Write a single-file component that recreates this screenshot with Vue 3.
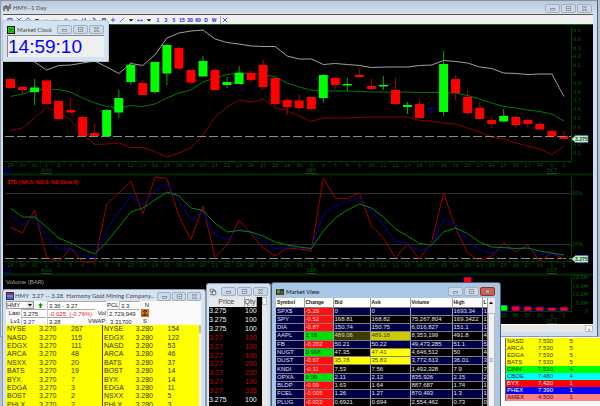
<template>
  <main class="desktop">
    <section class="window chart-window">
      <header class="titlebar">
        <svg class="app-icon" viewBox="0 0 8 8">
          <rect width="8" height="8" fill="#d8d8d8" />
          <path d="M1 2v5M3 1v4M5 2v5M7 0v5" stroke="#222" />
          <path d="M2.5 2h1v2h-1zM4.5 3h1v3h-1z" fill="#fff" stroke="#333" stroke-width=".5" />
        </svg>
        <h1>HMY--1 Day</h1>
        <div class="controls">
          <button v-for="c in controls" :key="c.name" :aria-label="c.name">
            <svg viewBox="0 0 8 6"><path :d="c.path" /></svg>
          </button>
        </div>
      </header>
      <nav class="toolbar">
        <div v-for="(group, g) in tools" :key="g" class="tool-group">
          <button v-for="(t, i) in group" :key="i" :class="t.kind" :aria-label="t.name">
            <svg v-if="t.path" viewBox="0 0 8 8"><path :d="t.path" /></svg>
            <template v-else>{{ t.name }}</template>
          </button>
        </div>
      </nav>
      <svg class="chart" viewBox="3 25 590 299">
        <rect x="3" y="25" width="590" height="299" fill="#000" />

        <!-- panel frames and axes -->
        <g fill="none" stroke="#003f00">
          <path d="M3 174.5H593M3 274.5H593" stroke="#002c00" stroke-width="2" />
          <path d="M4 161.5H571.5V27M4 261.5H571.5V177M4 311.5H571.5V277" />
          <path :d="ticks" />
        </g>
        <path d="M5 193.5H571M5 244.5H571" stroke="#2e2e2e" />

        <g class="axis">
          <template v-for="(d, i) in days" :key="i">
            <text :x="px(i)" y="167" text-anchor="middle">{{ d }}</text>
            <text :x="px(i)" y="267" text-anchor="middle">{{ d }}</text>
            <text v-if="i > 40" :x="px(i)" y="317" text-anchor="middle">{{ d }}</text>
          </template>
          <g v-for="m in months" :key="m.at + '-' + m.y">
            <text :x="px(m.at)" :y="m.y" text-anchor="middle">{{ m.label }}</text>
            <path :d="`M${px(m.at) - 5} ${m.y + 1.5}h10`" stroke="#2c3f2c" />
          </g>
          <text v-for="(p, i) in prices" :key="p" x="573" :y="32 + i * 8.8">{{ p }}</text>
          <text x="572" y="195">80%</text>
          <text x="572" y="246">20%</text>
          <text v-for="(v, i) in volumes" :key="v" x="588" :y="279 + i * 8.5" text-anchor="end">{{ v }}</text>
        </g>
        <g class="year">
          <text x="5" y="171">13</text>
          <text x="5" y="271">13</text>
          <path d="M4.5 172.5h6M4.5 272.5h6" stroke="#0000b0" />
        </g>

        <!-- bands -->
        <g fill="none" stroke-linejoin="round">
          <polyline :points="line(upper, 1)" stroke="#a0a0a0" />
          <polyline :points="line(middle)" stroke="#007a00" />
          <polyline :points="line(lower)" stroke="#8a0000" />
        </g>

        <!-- candles: body top, body bottom, high, low -->
        <g v-for="(c, i) in candles" :key="i" :fill="c[4]" :stroke="c[4]">
          <path :d="`M${px(i)} ${c[2]}V${c[3]}`" opacity=".65" />
          <rect :x="px(i) - 4.5" :y="c[0]" width="9" :height="c[1] - c[0]" stroke="none" />
        </g>

        <path d="M5 136.5H571M5 258.5H571" stroke="#8c8c8c" stroke-dasharray="9 3" />

        <!-- stochastics -->
        <g fill="none" stroke-linejoin="round">
          <polyline :points="line(stoK)" stroke="#a00000" />
          <polyline :points="line(stoD)" stroke="#0000a0" />
          <polyline :points="line(stoSlow)" stroke="#008a00" />
        </g>
        <text x="7" y="184" class="sto">STO (%K:5, %D:3, %D Slow:3)</text>
        <text x="6" y="284" class="vol">Volume (BAR)</text>

        <!-- volume -->
        <g stroke="#0000c8" stroke-width=".7">
          <rect
            v-for="b in volumeBars"
            :key="b.at"
            :x="px(b.at) - 4"
            :y="b.top"
            width="8"
            :height="b.bottom - b.top"
            :fill="b.fill"
          />
        </g>

        <g v-for="y in [139, 259]" :key="y" class="tag">
          <path :d="`M571.5 ${y}l4 -3.5h12.5v7h-12.5z`" />
          <text x="575" :y="y + 2">3.275</text>
        </g>
      </svg>
      <div class="hscroll">
        <button aria-label="Scroll right">›</button>
      </div>
    </section>

    <section class="venues">
      <table>
        <tbody>
          <tr v-for="v in venues" :key="v[0]" :style="{ background: v[3], color: v[4] }">
            <td>{{ v[0] }}</td>
            <td>{{ v[1] }}</td>
            <td>{{ v[2] }}</td>
          </tr>
        </tbody>
      </table>
    </section>

    <section class="window clock-window">
      <header class="titlebar">
        <svg class="app-icon" viewBox="0 0 8 8">
          <rect x=".5" y=".5" width="7" height="7" fill="#00d820" stroke="#300" />
          <path d="M2 2l4 4M6 2l-4 4" stroke="#087010" stroke-width=".8" />
        </svg>
        <h2>Market Clock</h2>
        <div class="controls">
          <button v-for="c in controls" :key="c.name" :aria-label="c.name">
            <svg viewBox="0 0 8 6"><path :d="c.path" /></svg>
          </button>
        </div>
      </header>
      <div class="time">{{ time }}</div>
    </section>

    <section class="window level-window">
      <header class="titlebar">
        <svg class="app-icon" viewBox="0 0 8 8">
          <rect width="8" height="8" fill="#202a78" />
          <path d="M1 2h6" stroke="#e03030" stroke-width="1.5" />
          <path d="M1 4h6" stroke="#d8e0ff" />
          <path d="M1 6h6" stroke="#4c74e8" stroke-width="1.5" />
        </svg>
        <h2><span>HMY</span><span>3.27 -- 3.28</span><span>Harmony Gold Mining Company...</span></h2>
        <div class="controls">
          <button v-for="c in controls" :key="c.name" :aria-label="c.name">
            <svg viewBox="0 0 8 6"><path :d="c.path" /></svg>
          </button>
        </div>
      </header>
      <form class="quote" @submit.prevent>
        <div class="quote-row first">
          <div class="symbol">
            <select v-model="symbol" aria-label="Symbol">
              <option>HMY</option>
            </select>
            <svg viewBox="0 0 6 6"><path d="M1 2h4l-2 2.5z" /></svg>
          </div>
          <svg class="up" viewBox="0 0 6 6"><path d="M3 0l3 3H4v3H2V3H0z" fill="#009000" /></svg>
          <input value="3.36 - 3.27" aria-label="Range" />
          <label for="pcl">PCL</label>
          <input id="pcl" value="3.3" />
          <b>N</b>
        </div>
        <div class="quote-row second">
          <label for="last">Last</label>
          <input id="last" value="3.275" />
          <input class="loss" value="-0.025  (-0.76%)" aria-label="Change" />
          <label for="vol">Vol</label>
          <input id="vol" value="2,729,949" />
          <svg class="mark" viewBox="0 0 8 8">
            <rect width="8" height="8" fill="#c87828" />
            <path d="M4 1v6M2 3l2-2 2 2M1 6h6" fill="none" stroke="#4a2508" />
          </svg>
        </div>
        <div class="quote-row third">
          <label for="lv1">Lv1</label>
          <input id="lv1" class="bid" value="3.27" />
          <input value="3.28" aria-label="Ask" />
          <label for="vwap">VWAP:</label>
          <input id="vwap" class="bare" value="3.31700" />
          <b>S</b>
        </div>
      </form>
      <div class="book">
        <table v-for="(side, s) in [bids, asks]" :key="s">
          <tbody>
            <tr v-for="r in side" :key="r[0]">
              <td>{{ r[0] }}</td>
              <td>{{ r[1] }}</td>
              <td>{{ r[2] }}</td>
            </tr>
          </tbody>
        </table>
        <div class="book-scroll"><button aria-label="Scroll up"></button></div>
      </div>
    </section>

    <section class="window sales-window">
      <header class="titlebar">
        <svg class="app-icon" viewBox="0 0 8 8">
          <rect x="1" y="1" width="6" height="6" fill="#f0f0e8" />
          <g fill="none" stroke="#444" stroke-width=".8">
            <circle cx="2.5" cy="2.5" r="1.5" />
            <circle cx="5" cy="5" r="2" />
            <path d="M4 1l3 2M1 6l2 1" />
          </g>
        </svg>
        <div class="controls">
          <button v-for="c in controls" :key="c.name" :aria-label="c.name">
            <svg viewBox="0 0 8 6"><path :d="c.path" /></svg>
          </button>
        </div>
      </header>
      <div class="sales-body">
        <table>
          <thead>
            <tr>
              <th>Price</th>
              <th>Qty</th>
            </tr>
          </thead>
          <tbody>
            <tr v-for="(s, i) in sales" :key="i" :class="{ down: s[0] === '3.27' }">
              <td>{{ s[0] }}</td>
              <td>{{ s[1] }}</td>
            </tr>
          </tbody>
        </table>
        <div class="sales-scroll"><button aria-label="Scroll up"></button></div>
      </div>
    </section>

    <section class="window market-window">
      <header class="titlebar">
        <svg class="app-icon" viewBox="0 0 8 8">
          <rect y="1" width="8" height="6" fill="#253a2a" />
          <path d="M1 2h3M5 4h2" stroke="#60c060" />
          <path d="M1 4h3" stroke="#d8c040" />
          <path d="M1 6h6" stroke="#c04040" />
        </svg>
        <h2>Market View</h2>
        <div class="controls">
          <button v-for="c in controls" :key="c.name" :aria-label="c.name">
            <svg viewBox="0 0 8 6"><path :d="c.path" /></svg>
          </button>
        </div>
      </header>
      <div class="market-body">
        <table>
          <colgroup>
            <col v-for="(w, i) in [28, 29, 37, 40, 42, 30, 5]" :key="i" :style="{ width: w + 'px' }" />
          </colgroup>
          <thead>
            <tr>
              <th v-for="h in ['Symbol', 'Change', 'Bid', 'Ask', 'Volume', 'High', 'L']" :key="h">{{ h }}</th>
            </tr>
          </thead>
          <tbody>
            <tr v-for="m in market" :key="m[0]">
              <td
                v-for="(v, i) in m"
                :key="i"
                :class="[i === 0 && 'sym', i === 1 && (v[0] === '-' ? 'loss' : 'gain'), flash[m[0] + i]]"
              >
                {{ v }}
              </td>
            </tr>
          </tbody>
        </table>
        <div class="market-scroll">
          <button aria-label="Scroll up"><svg viewBox="0 0 6 6"><path d="M1 4l2-2.5 2 2.5z" /></svg></button>
          <div class="thumb">≡</div>
        </div>
      </div>
    </section>
  </main>
</template>

<script setup>
import { ref } from 'vue';

const time = ref('14:59:10');
const symbol = ref('HMY');

const controls = [
  { name: 'Minimize', path: 'M1.5 3h5v2h-5z' },
  { name: 'Restore', path: 'M1.5 .5h5v5h-5zM3 2.5h2v1h-2z' },
  { name: 'Close', path: 'M1.5 .5h1.5l1 1.5 1-1.5h1.5l-1.5 2.5 1.5 2.5h-1.5l-1-1.5-1 1.5h-1.5l1.5-2.5z' },
];

const caret = { name: 'More', kind: 'caret', path: 'M1 3h6L4 6z' };
const tools = [
  [
    { name: 'Save', path: 'M1 2h6v5H1zM2 4h4' },
    { name: 'Draw', path: 'M1 1l3 3 3-3M2 7h5' },
    { name: 'Colors', path: 'M4 1l3 3-3 3-3-3z' },
    caret,
  ],
  [
    { name: 'Undo', kind: 'off', path: 'M1 4h6' },
    { name: 'Redo', kind: 'off', path: 'M1 4h6' },
  ],
  [
    { name: 'Up', path: 'M4 2l3 3H1zM4 5v2' },
    { name: 'Flat', path: 'M1 4h6' },
    { name: 'Bars', path: 'M2 2v4M4 3l2-1v4' },
  ],
  [
    { name: 'Pointer', path: 'M2 1l4 4H3z' },
    { name: 'Print', kind: 'dark', path: 'M2 2h4v4H2zM1 4h6' },
    { name: 'Cross', path: 'M4 1v6M1 4h6' },
    { name: 'Line', path: 'M1 7l6-6' },
    caret,
  ],
  [{ name: 'Spacing', path: 'M1 4h2v1H1zM5 4h2v1H5z' }, caret],
  ['1', '3', '5', '15', '30', '60', 'D', 'W'].map((name) => ({ name, kind: 'period' })),
  [{ name: 'Clear', kind: 'clear', path: 'M1 1l6 6M7 1L1 7' }],
];

const days =
  '29 30 31 1 2 5 6 7 8 9 12 13 14 15 16 19 20 21 22 23 26 27 28 29 30 3 4 5 6 9 10 11 12 13 16 17 18 19 20 23 24 25 26 27 30 1 2'.split(
    ' '
  );
const months = [
  { label: 'AUG', at: 3, y: 172 },
  { label: 'SEP', at: 25, y: 172 },
  { label: 'OCT', at: 45, y: 172 },
  { label: 'AUG', at: 3, y: 272 },
  { label: 'SEP', at: 25, y: 272 },
  { label: 'OCT', at: 45, y: 272 },
  { label: 'OCT', at: 45, y: 322 },
];
const prices = ['4.5', '4.4', '4.3', '4.2', '4.1', '4', '3.9', '3.8', '3.7', '3.6', '3.5', '3.4', '3.3', '3.2', '3.1'];
const volumes = ['22.5M', '16.9M', '11.2M', '5.6M', '0'];

// one bar every 12 units
const px = (i) => Math.round((10.5 + i * 12.03) * 10) / 10;
const line = (values, from = 0) => values.map((y, i) => `${px(i + from)},${y}`).join(' ');

const ticks =
  days.map((d, i) => `M${px(i) + 6} 161v2M${px(i) + 6} 261v2`).join('') +
  prices.map((p, i) => `M571 ${30 + i * 8.8}h2`).join('');

const upper = [
  58, 62, 70, 65.5, 65, 63, 61, 67, 73.5, 63.5, 65.5, 55, 38, 33, 31, 30, 39, 42.5, 44, 46, 46.5, 46.5, 56, 59, 59,
  64.5, 63.5, 64.5, 65.5, 67.5, 67, 67, 67, 65.5, 65, 60.5, 61.5, 63, 67, 68.5, 73, 73.5, 74.5, 74, 74, 96.5,
];
const middle = [
  96.5, 94, 90, 89, 89.5, 92, 98, 103, 106.5, 108, 105.5, 106.5, 104, 98, 93, 90, 82, 78, 74.5, 72.5, 73.5, 74, 77,
  83, 87, 90, 91, 91, 91, 91.5, 92, 92, 92.5, 92, 92.5, 92.5, 92.5, 93, 95.5, 99, 103, 106.5, 108, 110, 111.5, 114,
  121,
];
const lower = [
  130.5, 128, 118, 107, 113, 119.5, 134, 144.5, 144, 143, 147.5, 147.5, 151.5, 157, 153, 148, 135, 117, 107, 100, 102,
  99, 107.5, 111, 116, 121.5, 118, 118, 118, 117.5, 117, 117, 117, 117, 120.5, 121, 123, 124, 128, 132, 137, 139, 143,
  146, 149, 154.5, 146,
];

const stoK = [
  227, 233, 210, 257, 262, 248, 262, 262, 204, 193, 181, 214, 177, 178.5, 216, 239.5, 206, 257.5, 245, 220, 234, 248,
  256, 248, 249, 251, 178, 198, 198.5, 193, 226, 238, 258, 244, 259, 242, 193, 228, 253, 261, 256, 243, 252, 245, 261,
  253, 259,
];
const stoD = [
  215, 225, 216.5, 237, 249.5, 248, 255, 258, 230, 212, 196, 205, 191, 184, 201, 220, 212, 235, 240, 229, 232, 241,
  249, 247, 248, 249.5, 214, 206, 202, 197, 211, 225, 241, 243, 251, 246, 219, 225, 240, 250, 253, 249, 249, 248, 254,
  254, 256,
];
const stoSlow = [
  208, 217, 217, 227, 238, 243, 249, 254, 242, 227, 212, 208, 200, 192, 196, 208, 210.5, 223, 232, 230.5, 232, 236,
  242, 245, 247, 248.5, 231, 218, 210, 204, 208, 217, 229, 236, 243.5, 245, 232, 228, 233.5, 242, 247, 247.5, 248.5,
  248, 251, 253, 255,
];

const R = '#ff0000';
const G = '#00ff00';
const B = '#0000b0';
const candles = [
  [79, 88, 78, 89, R],
  [87, 90, 86, 94, R],
  [87.5, 92, 79, 105, G],
  [80.5, 104, 79, 104, R],
  [101, 119, 100, 119, R],
  [110, 112.5, 98, 113, R],
  [117, 136, 116, 136, R],
  [133, 136, 124, 136, R],
  [110, 136, 109, 136, G],
  [98, 112.5, 90, 118, G],
  [65, 82, 62, 85, G],
  [83, 95, 80, 95, R],
  [62, 92, 62, 94, G],
  [45, 73.5, 44, 85, G],
  [48, 68.5, 46, 70, R],
  [70, 82.5, 70, 84, R],
  [61, 76.5, 56, 76, G],
  [70, 90, 68, 91, R],
  [82, 85, 77, 88, G],
  [73, 84, 66, 84, G],
  [73, 80, 70, 83, R],
  [65, 87, 60, 89, R],
  [78, 104, 77, 106, R],
  [100, 107, 98, 115, R],
  [100.5, 108, 94, 110, R],
  [97, 109, 97, 111, R],
  [75, 98, 74, 103, G],
  [78, 85, 77, 89, R],
  [84, 85.5, 78, 91, G],
  [75, 77, 69, 78, R],
  [86, 89, 79, 90, R],
  [85, 86.5, 76, 90, G],
  [90, 104, 78, 105, R],
  [105, 107, 102, 114, G],
  [104, 118, 100, 118, R],
  [108, 109, 106, 117, B],
  [64, 112, 51, 116, G],
  [79, 93, 75, 100, R],
  [97, 113, 90, 115, R],
  [108, 119, 102, 119, R],
  [120, 124, 116, 128, R],
  [116, 121.5, 109, 122, G],
  [117, 125, 115, 128, R],
  [120, 124, 118, 128, R],
  [124, 129.5, 122, 130, R],
  [131, 136, 130, 138, R],
  [136, 139, 131, 139, R],
];

const volumeBars = [
  { at: 38, top: 277, bottom: 311, fill: R },
  { at: 41, top: 305, bottom: 311, fill: G },
  { at: 42, top: 306, bottom: 311, fill: R },
  { at: 43, top: 306.5, bottom: 311, fill: R },
  { at: 44, top: 307, bottom: 311, fill: R },
  { at: 45, top: 307.5, bottom: 311, fill: R },
  { at: 46, top: 307, bottom: 311, fill: R },
];

const bids = [
  ['NYSE', '3.270', 267],
  ['NASD', '3.270', 115],
  ['EDGX', '3.270', 111],
  ['ARCA', '3.270', 48],
  ['NSXX', '3.270', 20],
  ['BATS', '3.270', 19],
  ['BYX', '3.270', 7],
  ['EDGA', '3.270', 3],
  ['BOST', '3.270', 2],
  ['PHLX', '3.270', 2],
];
const asks = [
  ['NYSE', '3.280', 154],
  ['EDGX', '3.280', 122],
  ['NASD', '3.280', 53],
  ['ARCA', '3.280', 46],
  ['BATS', '3.280', 37],
  ['BOST', '3.280', 14],
  ['BYX', '3.280', 14],
  ['EDGA', '3.280', 11],
  ['NSXX', '3.280', 5],
  ['PHLX', '3.280', 3],
];

const sales = [
  ['3.275', 100],
  ['3.275', 100],
  ['3.275', 100],
  ['3.27', 100],
  ['3.27', 100],
  ['3.27', 100],
  ['3.27', 200],
  ['3.27', 200],
  ['3.27', 100],
  ['3.27', 335],
  ['3.275', 100],
  ['3.27', 100],
];

const market = [
  ['SPX$', '-5.29', '0', '0', '', '1693.34', '1'],
  ['SPY', '-0.52', '168.81', '168.82', '75,267,804', '169.3422', '1'],
  ['DIA', '-0.87', '150.74', '150.75', '6,016,827', '151.1', '1'],
  ['AAPL', '1.18', '489.06', '489.18', '8,353,199', '491.8', '4'],
  ['FB', '-0.202', '50.21', '50.22', '49,473,285', '51.1', '5'],
  ['NUGT', '0.968', '47.35', '47.41', '4,646,512', '50', '4'],
  ['DUST', '-0.67', '35.78', '35.83', '3,772,613', '36.01', '3'],
  ['KNDI', '-0.11', '7.53', '7.56', '1,492,328', '7.9', '7'],
  ['OPXA', '0.09', '2.11', '2.12', '835,926', '2.15', '2'],
  ['BLDP', '-0.09', '1.63', '1.64', '887,687', '1.74', '1'],
  ['FCEL', '-0.005', '1.26', '1.27', '870,493', '1.3', '1'],
  ['PLUG', '-0.022', '0.6921', '0.694', '2,554,462', '0.73', '0'],
];
// freshly changed cells, keyed by symbol + column
const flash = {
  AAPL2: 'fading',
  AAPL3: 'warm',
  NUGT3: 'hot',
  DUST2: 'hot',
  DUST3: 'hot',
};

const venues = [
  ['NASD', '7.530', 5, '#ffff00', '#333300'],
  ['ARCA', '7.530', 5, '#ffff00', '#333300'],
  ['EDGA', '7.530', 5, '#ffff00', '#333300'],
  ['BATS', '7.530', 5, '#ffff00', '#333300'],
  ['CINN', '7.510', 4, '#00ff00', '#003300'],
  ['CBOE', '7.480', 4, '#00ffff', '#003333'],
  ['BYX', '7.420', 1, '#ff0000', '#ffffff'],
  ['PHEX', '7.390', 1, '#0000ff', '#ffffff'],
  ['AMEX', '4.500', 1, '#ff8080', '#4a1010'],
];
</script>

<style>
body {
  margin: 0;
  overflow: hidden;
}
</style>

<style scoped>
.desktop {
  position: relative;
  height: 100vh;
  overflow: hidden;
  background: #b4c2d2;
  font-family: 'Liberation Sans', Arial, sans-serif;
  font-size: 6px;
  color: #222;
}
* {
  box-sizing: border-box;
}
button,
input,
select {
  font: inherit;
  color: inherit;
  margin: 0;
  padding: 0;
  border: none;
  border-radius: 0;
  background: none;
  min-width: 0;
}
table {
  border-collapse: collapse;
  table-layout: fixed;
  width: 100%;
}
td,
th {
  padding: 0;
  text-align: left;
  white-space: nowrap;
}

/* windows */
.window {
  position: absolute;
  display: flex;
  flex-direction: column;
  background: #d5e2f0;
  border: 1px solid #8c9aaa;
}
.titlebar {
  display: flex;
  align-items: center;
  gap: 2px;
  flex: none;
}
.titlebar h1,
.titlebar h2 {
  margin: 0;
  font: 6px/8px Lato, 'Open Sans', sans-serif;
  color: #444;
  white-space: nowrap;
}
.app-icon {
  width: 8px;
  height: 8px;
  flex: none;
}
.controls {
  display: flex;
  gap: 1px;
  margin-left: auto;
  flex: none;
}
.controls button {
  width: 15px;
  height: 9px;
  display: flex;
  align-items: center;
  justify-content: center;
  border: 1px solid #9fb0c4;
  border-radius: 2px;
  background: #ccd9e8;
}
.controls svg {
  width: 7px;
  height: 5px;
  fill: #fff;
  stroke: #59626e;
  stroke-width: 0.8;
}

/* chart */
.chart-window {
  top: 0;
  left: 0;
  right: 2px;
  padding: 0 4px 4px 2px;
  background: #cfdfef;
  border-top-color: #8a929c;
  border-right-color: #555f6c;
}
.chart-window .titlebar {
  height: 13px;
  margin: 0 -4px 0 -2px;
  padding: 1px 5px 0 2px;
  background: linear-gradient(#b9c9da, #d6e3f0);
}
.toolbar {
  display: flex;
  height: 11px;
  gap: 2px;
  padding: 1px 3px 0;
  background: #f0f0f0;
  border-top: 1px solid #555;
  border-bottom: 1px solid #0f6a1a;
}
.tool-group {
  display: flex;
  align-items: center;
}
.tool-group button {
  width: 9px;
  height: 8px;
  font: bold 5px/8px 'Liberation Sans', Arial, sans-serif;
  color: #2222e0;
}
.tool-group svg {
  display: block;
  width: 6px;
  height: 6px;
  margin: 1px;
  fill: none;
  stroke: #2a2ae0;
}
.tool-group .caret {
  width: 7px;
}
.tool-group .caret svg {
  fill: #000;
  stroke: none;
}
.tool-group .off svg {
  stroke: #a8a8a8;
}
.tool-group .dark svg {
  stroke: #333;
}
.tool-group .period {
  width: 8px;
  text-align: center;
}
.tool-group .clear {
  border-left: 1px solid #b0b0b0;
}
.chart {
  display: block;
  width: 100%;
}
.axis {
  font: 5px 'DejaVu Sans', sans-serif;
  fill: #006400;
}
.year {
  font: 5px 'DejaVu Sans', sans-serif;
  fill: #0000c0;
}
.sto {
  font: bold 5px 'Liberation Sans', Arial, sans-serif;
  fill: #e00000;
}
.vol {
  font: 6px 'Liberation Sans', Arial, sans-serif;
  fill: #a0a0a0;
}
.tag path {
  fill: #c4eec4;
  stroke: #5070c8;
  stroke-width: 0.8;
}
.tag text {
  font: bold 5px 'Liberation Sans', Arial, sans-serif;
  fill: #185018;
}
.hscroll {
  height: 8px;
  display: flex;
  justify-content: flex-end;
  background: #e6e6e6;
  border-top: 1px solid #fff;
}
.hscroll button {
  width: 8px;
  line-height: 6px;
  border: 1px solid #bbb;
  background: #f4f4f4;
}

/* clock */
.clock-window {
  top: 20px;
  left: 2px;
  width: 107px;
  padding: 3px 4px 4px;
  border-color: #b4c4d6;
  border-radius: 3px 3px 0 0;
}
.clock-window .titlebar {
  height: 11px;
}
.time {
  height: 22px;
  font-size: 19px;
  line-height: 22px;
  color: #0000ff;
  background: #f0f0f0;
  border-top: 1px solid #888;
  border-left: 1px solid #888;
}

/* level 2 */
.level-window {
  top: 289px;
  bottom: 0;
  left: 2px;
  width: 204px;
  padding: 1px 4px 0 3px;
  border-bottom: none;
  border-radius: 3px 3px 0 0;
}
.level-window .titlebar {
  height: 10px;
  gap: 1px;
}
.level-window h2 {
  display: flex;
  gap: 3px;
}
.level-window .controls button {
  width: 14px;
}
.quote {
  background: #fafafa;
}
.quote-row {
  display: grid;
  align-items: center;
  height: 8px;
  gap: 1px;
  line-height: 7px;
}
.first {
  grid-template-columns: 28px 11px 59px 11px 21px 8px;
}
.second {
  grid-template-columns: 14px 25px 48px 10px 32px 9px;
}
.third {
  grid-template-columns: 14px 25px 27px 32px 30px 8px;
}
.quote input {
  width: 100%;
  height: 8px;
  padding: 0 1px;
  border-top: 1px solid #aaa;
  border-left: 1px solid #ccc;
  background: #fff;
}
.quote .bare {
  border-color: transparent;
}
.quote label {
  text-align: right;
  white-space: nowrap;
}
.quote b {
  font-weight: normal;
  text-align: right;
}
.quote .loss {
  color: #e02020;
  white-space: pre;
}
.quote .bid {
  color: #2020ff;
}
.symbol {
  display: flex;
  border: 1px solid #999;
  height: 8px;
  background: #fff;
}
.symbol select {
  flex: 1;
  appearance: none;
  line-height: 6px;
}
.symbol svg {
  width: 6px;
  height: 6px;
  background: #e4e4e4;
}
.up {
  width: 5px;
  height: 5px;
  justify-self: center;
}
.mark {
  width: 8px;
  height: 8px;
  justify-self: end;
}
.book {
  display: flex;
  height: 84px;
  background: #fff;
  flex: none;
}
.book table {
  width: 96px;
  height: 84px;
  font-size: 7px;
  line-height: 8px;
  background: #ffff00;
  color: #333300;
}
.book table + table {
  border-left: 1px solid #444400;
}
.book td {
  width: 32px;
  padding-left: 1px;
}
.book-scroll {
  flex: 1;
  background: #f4f4f4;
}
.book-scroll button,
.sales-scroll button {
  display: block;
  width: 100%;
  height: 8px;
  border: 1px solid #bbb;
  background: #f6f6f6;
}

/* time & sales */
.sales-window {
  top: 283px;
  bottom: 0;
  left: 206px;
  width: 65px;
  padding: 2px 2px 0;
  border-bottom: none;
  border-radius: 3px 3px 0 0;
}
.sales-window .titlebar {
  height: 11px;
}
.sales-body {
  display: flex;
  margin-right: 1px;
  background: #000;
}
.sales-body table {
  flex: 1;
  height: 116px;
  font-size: 7px;
  line-height: 8px;
  color: #eee;
}
.sales-body th {
  height: 10px;
  font-weight: normal;
  text-align: center;
  background: #e8e8e8;
  border-right: 1px solid #aaa;
  color: #444;
}
.sales-body th:first-child {
  width: 35px;
}
.sales-body td:last-child {
  padding-left: 1px;
}
.sales-body th:last-child {
  text-align: left;
}
.sales-body .down {
  color: #c80000;
}
.sales-scroll {
  width: 5px;
  margin-left: 5px;
  background: #e8e8e8;
}

/* market view */
.market-window {
  top: 282px;
  bottom: 0;
  left: 271px;
  width: 230px;
  padding: 2px 5px 0 4px;
  border-color: #4c5c70;
  border-bottom: none;
  border-radius: 3px 3px 0 0;
  background: #a9c6e4;
}
.market-window .titlebar {
  height: 13px;
}
.market-window h2 {
  color: #111;
}
.market-window .controls button:last-child {
  background: #cf5f4c;
  border-color: #8c3428;
}
.market-body {
  display: flex;
  background: #f0f0f0;
}
.market-body table {
  width: 211px;
  height: 109px;
  line-height: 7px;
  color: #e0e0ee;
  background: #000;
}
.market-body th,
.market-body td {
  height: 7px;
  padding-left: 1px;
  overflow: hidden;
  border-right: 1px solid #a0a0a0;
  border-bottom: 1px solid #808080;
}
.market-body th {
  height: 9px;
  font-size: 5px;
  color: #111;
  background: #fff;
}
.market-body tr:nth-child(odd),
.market-body .sym {
  background: #000046;
}
.market-body .loss {
  background: #ff1010;
  color: #ffd0d0;
}
.market-body .gain {
  background: #00e000;
  color: #004400;
}
.market-body .fading {
  background: #3c3c00;
  color: #d8d8b0;
}
.market-body .warm {
  background: #cccc00;
  color: #444400;
}
.market-body .hot {
  background: #ffff00;
  color: #444400;
}
.market-scroll {
  flex: 1;
  display: flex;
  flex-direction: column;
  background: #ececec;
}
.market-scroll button {
  height: 9px;
}
.market-scroll button svg {
  display: block;
  width: 6px;
  height: 6px;
}
.thumb {
  flex: 1;
  display: flex;
  align-items: center;
  justify-content: center;
  margin-top: 6px;
  border: 1px solid #b8b8b8;
  background: #f2f2f2;
  color: #777;
}

/* venue colours */
.venues {
  position: absolute;
  top: 337px;
  left: 500px;
  right: 0;
  bottom: 0;
  padding: 1px 0 0 4px;
  border-left: 1px solid #8c9aaa;
  background: #fff;
}
.venues table {
  border-left: 1px solid #666;
}
.venues td {
  height: 7px;
  line-height: 7px;
  padding-left: 1px;
}
</style>
